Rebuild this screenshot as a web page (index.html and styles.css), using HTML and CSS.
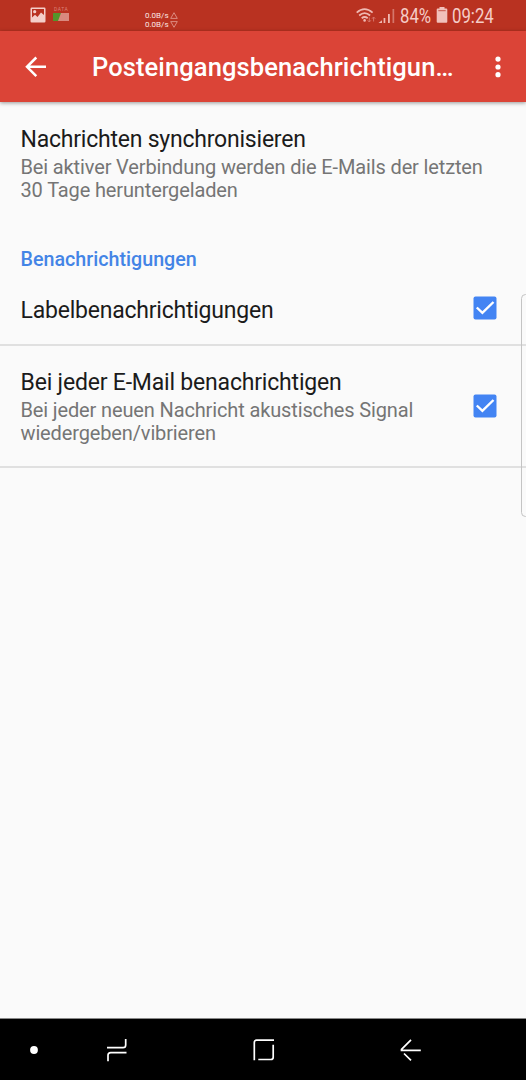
FILE: index.html
```html
<!DOCTYPE html>
<html lang="de">
<head>
<meta charset="utf-8">
<title>Posteingangsbenachrichtigungen</title>
<link rel="stylesheet" href="styles.css">
</head>
<body>
<div class="screen">
  <div class="status">
    <svg class="photo" width="16" height="16" viewBox="0 0 16 16"><path fill="#f4cfc9" fill-rule="evenodd" d="M1.700 .5h12.600q1.200 0 1.200 1.200v12.600q0 1.200-1.200 1.200H1.700Q.5 15.500 .5 14.300V1.700Q.5 .5 1.700 .5zM2 2v8.500l3-2.700 2.500 2.200 3.500-4.500 3 2.500V2z"/><circle cx="4.700" cy="4.700" r="1.600" fill="#f4cfc9"/></svg>
    <div class="data"><span class="data-label">DATA</span><svg width="16" height="8" viewBox="0 0 16 8"><path fill="#d9897f" d="M0 0h16v8H0z"/><path fill="#54942b" d="M0 0h8L5 8H0z"/></svg></div>
    <div class="speed">
      <div><span>0.0B/s</span><svg width="8" height="7" viewBox="0 0 8 7"><path d="M4 .7L7.300 6.400H.7z"/></svg></div>
      <div><span>0.0B/s</span><svg width="8" height="7" viewBox="0 0 8 7"><path d="M4 6.300L7.300 .6H.7z"/></svg></div>
    </div>
    <svg class="signals" width="40" height="18" viewBox="0 0 40 18">
      <g fill="none" stroke="#efb9b2" stroke-width="1.800"><path d="M.7 5.600Q8.500-1.300 16.600 5.600M3.200 8.500q5.400-4.700 10.900 0M5.700 11.300q3-2.500 6 0"/></g>
      <circle cx="8.600" cy="13.400" r="1.300" fill="#efb9b2"/>
      <g fill="none" stroke="#d7776c" stroke-width="1"><path d="M13.300 10.500v4.500m-1.600-1.700 1.600 1.700 1.600-1.700M17.600 14.500V10m-1.600 1.700 1.600-1.700 1.600 1.700"/></g>
      <g fill="#efb9b2"><path d="M22.500 16l3.500-2.800V16zM27.600 11h1.700v5h-1.700zM32 7h1.800v9H32z"/><path fill="#d4766b" d="M36.500 2h1.700v14h-1.700z"/></g>
    </svg>
    <span class="stat-text percent">84%</span>
    <svg class="battery" width="12" height="16" viewBox="0 0 12 16"><path fill="#f1c1bb" d="M3.500 0h5v1.500h1.800q1 0 1 1v12.300q0 1-1 1H1.700q-1 0-1-1V2.500q0-1 1-1h1.800z"/><path fill="#c9564a" d="M2.300 3.200h7.400v1H2.300z"/></svg>
    <span class="stat-text clock">09:24</span>
  </div>
  <header class="appbar">
    <svg class="back" width="22" height="22" viewBox="0 0 22 22"><path fill="none" stroke="#fff" stroke-width="2.500" d="M11.300 1.500L2 10.800l9.300 9.300M2 10.800h19"/></svg>
    <h1 class="title">Posteingangsbenachrichtigun…</h1>
    <svg class="more" width="6" height="22" viewBox="0 0 6 22"><g fill="#fff"><circle cx="3" cy="3.100" r="2.600"/><circle cx="3" cy="11" r="2.600"/><circle cx="3" cy="18.700" r="2.600"/></g></svg>
  </header>
  <main class="content">
    <section class="row sync">
      <div class="label">Nachrichten synchronisieren</div>
      <div class="sub">Bei aktiver Verbindung werden die E-Mails der letzten<br>30 Tage heruntergeladen</div>
    </section>
    <h2 class="category">Benachrichtigungen</h2>
    <section class="row labels">
      <div class="label">Labelbenachrichtigungen</div>
      <svg class="check" width="24" height="24" viewBox="0 0 24 24"><rect x=".5" y=".5" width="23" height="23" rx="2" fill="#4384f3"/><path fill="none" stroke="#fff" stroke-width="2.400" d="M3.800 11.500l5.600 5.400L20.500 6"/></svg>
    </section>
    <section class="row each">
      <div>
        <div class="label">Bei jeder E-Mail benachrichtigen</div>
        <div class="sub">Bei jeder neuen Nachricht akustisches Signal<br>wiedergeben/vibrieren</div>
      </div>
      <svg class="check" width="24" height="24" viewBox="0 0 24 24"><rect x=".5" y=".5" width="23" height="23" rx="2" fill="#4384f3"/><path fill="none" stroke="#fff" stroke-width="2.400" d="M3.800 11.500l5.600 5.400L20.500 6"/></svg>
    </section>
    <div class="edge-handle"></div>
  </main>
  <nav class="navbar">
    <svg class="nav-dot" width="8" height="8" viewBox="0 0 8 8"><circle cx="4" cy="4" r="3.900" fill="#fff"/></svg>
    <svg class="nav-recent" width="22" height="24" viewBox="0 0 22 24"><path d="M1 9.700h16q2.700 0 2.700-2.700V1M20.500 14.600H4.700Q2 14.600 2 17.300v6"/></svg>
    <svg class="nav-home" width="22" height="22" viewBox="0 0 22 22"><path d="M1.300 21.200V3.500q0-2.300 2.300-2.300H21M20.200 5.800v12.400q0 2.300-2.300 2.300H5.300"/></svg>
    <svg class="nav-back" width="22" height="22" viewBox="0 0 22 22"><path d="M11 .9L1.500 10.300v1h19.300M4 14.500l7 6.900"/></svg>
  </nav>
</div>
</body>
</html>
```
FILE: styles.css
```css
* { box-sizing: border-box; }
body { margin: 0; font-family: Roboto, "Liberation Sans", sans-serif; }
svg { display: block; flex: none; }
.screen { width: 526px; height: 1080px; display: flex; flex-direction: column; background: #fafafa; overflow: hidden; }
.status { height: 31px; flex: none; display: flex; align-items: flex-start; background: #b93221; white-space: nowrap; }
.photo { margin: 7px 0 0 30px; }
.data { width: 16px; margin: 7px 0 0 7px; }
.data-label { display: block; height: 6px; padding-left: 1px; font-size: 5px; line-height: 5px; letter-spacing: .5px; color: #d98077; }
.speed { width: 40px; margin: 11px 0 0 76px; font-size: 8px; line-height: 9px; color: #fbe6e3; }
.speed > div { display: flex; height: 9px; align-items: center; }
.speed span { width: 25px; }
.speed path { fill: none; stroke: #e5a198; stroke-width: .8; }
.signals { margin: 7px 0 0 171px; }
.stat-text { display: block; height: 31px; font-size: 19.500px; line-height: 33px; color: #f5cdc8; transform-origin: 0 50%; transform: scaleX(.86); }
.percent { width: 31px; margin-left: 4px; }
.battery { margin: 7px 0 0 5px; }
.clock { width: 45px; margin-left: 4px; }
.appbar { height: 71px; flex: none; display: flex; align-items: center; background: #db4437; box-shadow: 0 1px 4px rgba(0,0,0,.4); z-index: 1; }
.back { margin-left: 25px; }
.title { width: 373px; margin: 0 0 0 45px; font-size: 25.500px; font-weight: 500; line-height: 32px; letter-spacing: .1px; color: #fff; white-space: nowrap; }
.more { margin-left: 30px; }
.content { flex: 1; position: relative; }
.row { padding-left: 20.500px; white-space: nowrap; }
.label { font-size: 23px; line-height: 30px; letter-spacing: -.22px; color: #1b1b1b; }
.sub { padding-top: 1px; font-size: 20px; line-height: 23px; letter-spacing: -.135px; color: #757575; }
.sync { height: 119px; padding-top: 23px; }
.category { height: 52px; margin: 0; padding: 25px 0 0 20.500px; font-size: 19.700px; font-weight: 500; line-height: 28px; color: #4384e6; }
.labels { height: 73px; display: flex; justify-content: space-between; padding-top: 23px; padding-right: 29px; border-bottom: 2px solid #e0e0e0; }
.each { height: 122px; display: flex; align-items: center; justify-content: space-between; padding-right: 29px; border-bottom: 2px solid #e0e0e0; }
.each .label { letter-spacing: -.19px; }
.edge-handle { position: absolute; top: 192px; right: -4px; width: 9px; height: 223px; border: 1px solid #c4c4c4; border-radius: 5px; }
.navbar { height: 62px; flex: none; display: flex; align-items: center; background: #000; border-top: 1px solid #888; }
.navbar path { fill: none; stroke: #fff; stroke-width: 1.700; }
.nav-dot { margin-left: 30px; }
.nav-recent { margin-left: 68px; }
.nav-home { margin-left: 125px; }
.nav-back { margin-left: 125px; }
```
